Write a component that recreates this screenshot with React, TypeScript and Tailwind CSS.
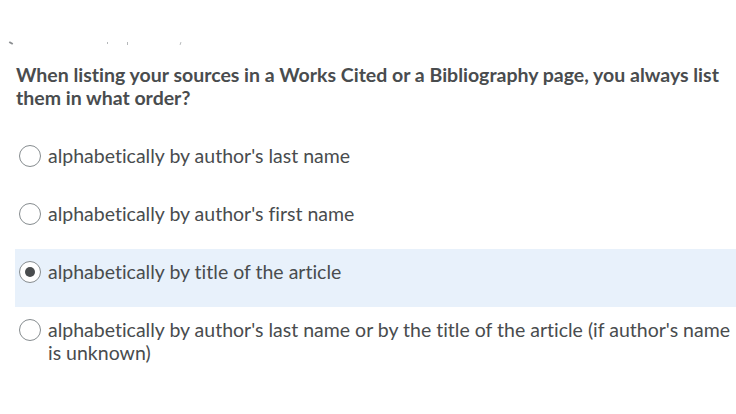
import React from "react";

const options = [
  "alphabetically by author's last name",
  "alphabetically by author's first name",
  "alphabetically by title of the article",
  "alphabetically by author's last name or by the title of the article (if author's name is unknown)",
];

export default function App() {
  const selected = 2;
  return (
    <div className="w-[736px] h-[414px] bg-white overflow-hidden text-[#494c4e] [font-variant-ligatures:none]" style={{ fontFamily: "Lato, 'Noto Sans', sans-serif" }}>
      <div className="h-[63px] pt-[42px] pl-[9px] flex items-start">
        <span className="block w-[4px] h-[2px] bg-[#8a8d90] rotate-[30deg]"></span>
        <span className="block w-[1px] h-[2px] bg-[#b5b8ba] ml-[94px]"></span>
        <span className="block w-[1px] h-[3px] bg-[#b5b8ba] ml-[19px]"></span>
        <span className="block w-[1px] h-[3px] bg-[#b5b8ba] ml-[52px] rotate-[20deg]"></span>
      </div>
      <div className="pl-[16px] pr-[8px] text-[19.5px] font-bold leading-[23px]">
        When listing your sources in a Works Cited or a Bibliography page, you always list them in what order?
      </div>
      <div className="mt-[24px] ml-[15px] flex flex-col">
        {options.map((o, i) => (
          <div
            key={i}
            className={`flex items-start pl-[4px] pr-[4px] pt-[11px] pb-[24px] ${i === selected ? "bg-[#e8f1fb]" : ""}`}
          >
            <span className="mt-[0.5px] shrink-0 w-[22px] h-[22px] rounded-full border border-[#868c8f] bg-white flex items-center justify-center">
              {i === selected && <span className="w-[10px] h-[10px] rounded-full bg-[#494c4e]"></span>}
            </span>
            <span className="ml-[7px] text-[19.5px] leading-[23px]">{o}</span>
          </div>
        ))}
      </div>
    </div>
  );
}
